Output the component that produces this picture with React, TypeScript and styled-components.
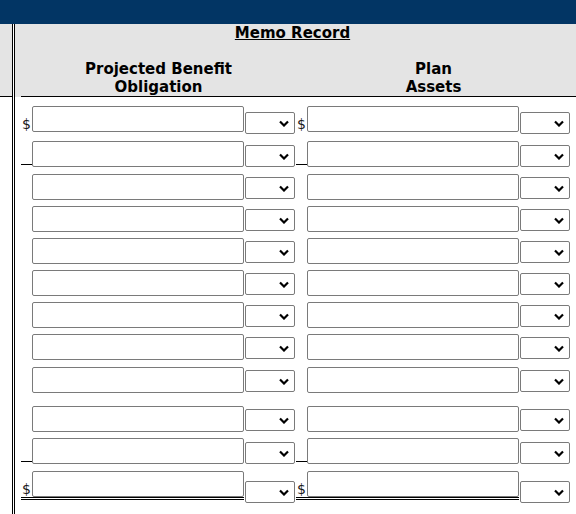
import React from "react";
import styled, { createGlobalStyle } from "styled-components";

type Rule = "none" | "single" | "double";

interface RowSpec {
  height: number;
  dollar?: boolean;
  rule: Rule;
  selectOffset: number;
}

const ROWS: RowSpec[] = [
  { height: 35, dollar: true, rule: "none", selectOffset: 6 },
  { height: 33, rule: "single", selectOffset: 4 },
  { height: 32, rule: "none", selectOffset: 3 },
  { height: 32, rule: "none", selectOffset: 3 },
  { height: 32, rule: "none", selectOffset: 3 },
  { height: 32, rule: "none", selectOffset: 3 },
  { height: 32, rule: "none", selectOffset: 3 },
  { height: 33, rule: "none", selectOffset: 3 },
  { height: 39, rule: "none", selectOffset: 3 },
  { height: 32, rule: "none", selectOffset: 3 },
  { height: 33, rule: "single", selectOffset: 4 },
  { height: 36, dollar: true, rule: "double", selectOffset: 10 },
];

const COLUMNS = ["Projected Benefit\nObligation", "Plan\nAssets"];

export default function App() {
  return (
    <>
      <GlobalStyle />
      <TopBar />
      <Body>
        <SideColumn>
          <SideHead />
        </SideColumn>
        <Main>
          <Header>
            <MemoTitle>Memo Record</MemoTitle>
            <HeadingRow>
              {COLUMNS.map((title, i) => (
                <Heading key={i}>{title}</Heading>
              ))}
            </HeadingRow>
          </Header>
          <Rows>
            {ROWS.map((row, r) => (
              <Row key={r} $height={row.height}>
                {COLUMNS.map((_, c) => (
                  <Column key={c}>
                    <Entry $rule={row.rule}>
                      <Dollar>{row.dollar ? "$" : ""}</Dollar>
                      <Amount type="text" />
                    </Entry>
                    <Picker $offset={row.selectOffset}>
                      <Choice>
                        <option value="" />
                      </Choice>
                      <Chevron width="10" height="7" viewBox="0 0 10 7">
                        <polyline
                          points="1,1.5 5,5.5 9,1.5"
                          fill="none"
                          stroke="#000"
                          strokeWidth="2.2"
                        />
                      </Chevron>
                    </Picker>
                  </Column>
                ))}
              </Row>
            ))}
          </Rows>
        </Main>
      </Body>
    </>
  );
}

const GlobalStyle = createGlobalStyle`
  body {
    margin: 0;
    background: #fff;
    font-family: "DejaVu Sans", Verdana, sans-serif;
    color: #000;
  }
`;

const TopBar = styled.div`
  height: 24px;
  background: #023564;
`;

const Body = styled.div`
  display: flex;
  min-height: 490px;
`;

const SideColumn = styled.div`
  width: 12px;
  flex-shrink: 0;
`;

const SideHead = styled.div`
  height: 72px;
  background: #e4e4e4;
  border-bottom: 1px solid #000;
`;

const Main = styled.div`
  flex: 1;
  border-left: 3px double #000;
`;

const Header = styled.div`
  background: #e4e4e4;
  padding-left: 6px;
`;

const MemoTitle = styled.div`
  height: 18px;
  margin-bottom: 17px;
  padding-right: 12px;
  font-size: 15px;
  line-height: 18px;
  font-weight: bold;
  text-align: center;
  text-decoration: underline;
`;

const HeadingRow = styled.div`
  display: flex;
  padding-top: 1px;
  border-bottom: 1px solid #000;
`;

const Heading = styled.div`
  width: 275px;
  white-space: pre-line;
  font-size: 15px;
  line-height: 18px;
  font-weight: bold;
  text-align: center;
`;

const Rows = styled.div`
  padding: 9px 0 0 6px;
`;

const Row = styled.div<{ $height: number }>`
  display: flex;
  height: ${(p) => p.$height}px;
`;

const Column = styled.div`
  display: flex;
  align-items: flex-start;
  width: 275px;
`;

const Entry = styled.div<{ $rule: Rule }>`
  display: flex;
  align-items: flex-start;
  width: 223px;
  height: ${(p) => (p.$rule === "single" ? 23 : 26)}px;
  border-bottom: ${(p) =>
    p.$rule === "single"
      ? "1px solid #000"
      : p.$rule === "double"
      ? "3px double #000"
      : "none"};
`;

const Dollar = styled.span`
  display: flex;
  align-items: flex-end;
  width: 10px;
  height: 26px;
  padding-left: 1px;
  font-size: 14px;
  line-height: 16px;
  color: #1a1a1a;
`;

const Amount = styled.input`
  box-sizing: border-box;
  width: 212px;
  height: 26px;
  margin: 0;
  padding: 1px 3px;
  border: 1px solid #7a7a7a;
  border-radius: 2px;
  background: #fff;
  font-size: 13px;
`;

const Picker = styled.div<{ $offset: number }>`
  position: relative;
  width: 50px;
  height: 22px;
  margin: ${(p) => p.$offset}px 0 0 1px;
`;

const Choice = styled.select`
  appearance: none;
  box-sizing: border-box;
  display: block;
  width: 50px;
  height: 22px;
  margin: 0;
  border: 1px solid #7a7a7a;
  border-radius: 2px;
  background: #fff;
  font-size: 13px;
`;

const Chevron = styled.svg`
  position: absolute;
  right: 6px;
  top: 8px;
  pointer-events: none;
`;
